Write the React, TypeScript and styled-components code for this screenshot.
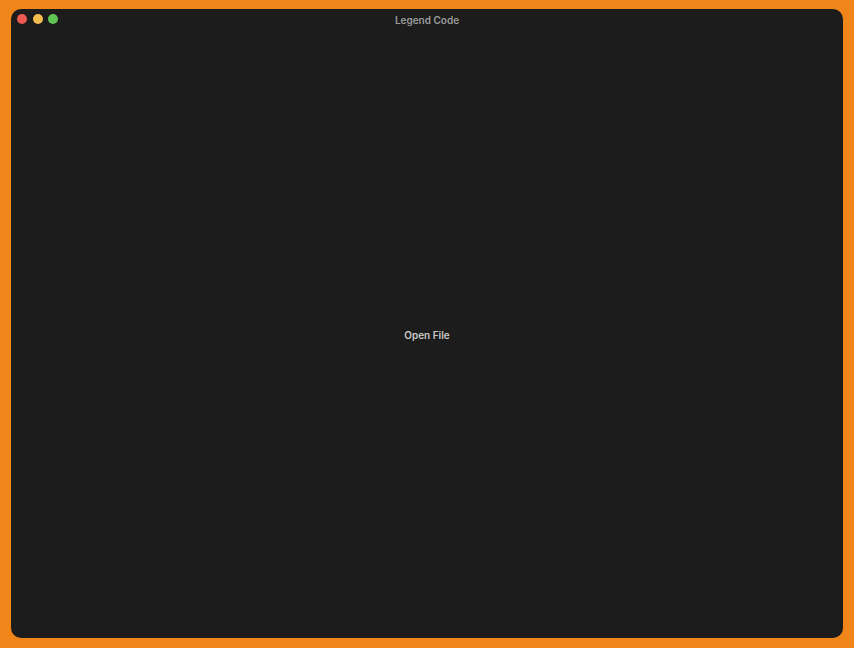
import React from "react";
import styled, { createGlobalStyle } from "styled-components";

const GlobalStyle = createGlobalStyle`
  html, body {
    margin: 0;
    padding: 0;
    background: #f0861a;
  }
  #root {
    height: 100vh;
  }
`;

const lights = ["#ed5a52", "#f4bd4f", "#5fc454"];

const App: React.FC = () => {
  return (
    <>
      <GlobalStyle />
      <Backdrop>
        <Window>
          <TitleBar>
            <Lights>
              {lights.map((c) => (
                <Light key={c} color={c} />
              ))}
            </Lights>
            <Title>Legend Code</Title>
          </TitleBar>
          <Body>
            <OpenButton>Open File</OpenButton>
          </Body>
        </Window>
      </Backdrop>
    </>
  );
};

export default App;

const Backdrop = styled.div`
  box-sizing: border-box;
  height: 100%;
  padding: 9px 11px 10px 11px;
  display: flex;
`;

const Window = styled.div`
  flex: 1;
  display: flex;
  flex-direction: column;
  background: #1c1c1c;
  border-radius: 10px;
  overflow: hidden;
`;

const TitleBar = styled.div`
  position: relative;
  height: 21px;
  display: flex;
  align-items: center;
  justify-content: center;
`;

const Lights = styled.div`
  position: absolute;
  left: 6px;
  top: 5px;
  display: flex;
  gap: 5.5px;
`;

const Light = styled.span<{ color: string }>`
  width: 10px;
  height: 10px;
  border-radius: 50%;
  background: ${(p) => p.color};
`;

const Title = styled.div`
  font-family: "Inter", "Liberation Sans", sans-serif;
  font-size: 10px;
  font-weight: 600;
  color: #9b9b9b;
`;

const Body = styled.div`
  flex: 1;
  display: flex;
  align-items: center;
  justify-content: center;
  padding-top: 2px;
`;

const OpenButton = styled.button`
  background: none;
  border: none;
  font-family: "Inter", "Liberation Sans", sans-serif;
  font-size: 10px;
  font-weight: 600;
  color: #c9c9c9;
  cursor: pointer;
  padding: 0;
`;
